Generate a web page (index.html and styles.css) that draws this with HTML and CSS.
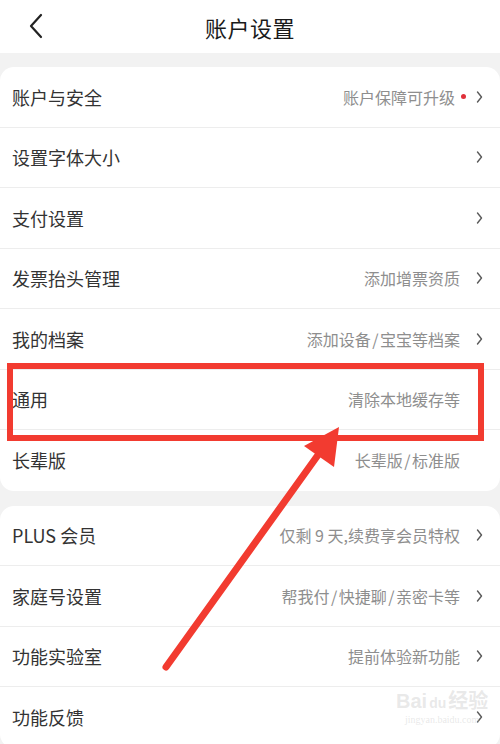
FILE: index.html
```html
<!DOCTYPE html>
<html lang="zh-CN">
<head>
    <meta charset="UTF-8">
    <meta name="viewport" content="width=device-width, initial-scale=1.0">
    <title>账户设置</title>
    <link rel="stylesheet" href="styles.css">
</head>
<body>
    <div class="page">
        <header class="nav">
            <svg class="back" width="16" height="26" viewBox="0 0 16 26">
                <polyline points="13,2 3,13 13,24" fill="none" stroke="#222" stroke-width="2.2" stroke-linejoin="round" stroke-linecap="round"/>
            </svg>
            <h1>账户设置</h1>
        </header>

        <div class="group">
            <div class="row">
                <span class="label">账户与安全</span>
                <span class="extra">账户保障可升级<i class="dot"></i></span>
                <svg class="chev" width="7" height="12" viewBox="0 0 7 12"><polyline points="1.5,1 5.5,6 1.5,11" /></svg>
            </div>
            <div class="row">
                <span class="label">设置字体大小</span>
                <span class="extra"></span>
                <svg class="chev" width="7" height="12" viewBox="0 0 7 12"><polyline points="1.5,1 5.5,6 1.5,11" /></svg>
            </div>
            <div class="row">
                <span class="label">支付设置</span>
                <span class="extra"></span>
                <svg class="chev" width="7" height="12" viewBox="0 0 7 12"><polyline points="1.5,1 5.5,6 1.5,11" /></svg>
            </div>
            <div class="row">
                <span class="label">发票抬头管理</span>
                <span class="extra">添加增票资质</span>
                <svg class="chev" width="7" height="12" viewBox="0 0 7 12"><polyline points="1.5,1 5.5,6 1.5,11" /></svg>
            </div>
            <div class="row">
                <span class="label">我的档案</span>
                <span class="extra">添加设备<span class="sl">/</span>宝宝等档案</span>
                <svg class="chev" width="7" height="12" viewBox="0 0 7 12"><polyline points="1.5,1 5.5,6 1.5,11" /></svg>
            </div>
            <div class="row">
                <span class="label">通用</span>
                <span class="extra">清除本地缓存等</span>
                <svg class="chev hidden" width="7" height="12" viewBox="0 0 7 12"></svg>
            </div>
            <div class="row">
                <span class="label">长辈版</span>
                <span class="extra">长辈版<span class="sl">/</span>标准版</span>
                <svg class="chev hidden" width="7" height="12" viewBox="0 0 7 12"></svg>
            </div>
        </div>

        <div class="group">
            <div class="row">
                <span class="label">PLUS 会员</span>
                <span class="extra">仅剩 9 天,续费享会员特权</span>
                <svg class="chev" width="7" height="12" viewBox="0 0 7 12"><polyline points="1.5,1 5.5,6 1.5,11" /></svg>
            </div>
            <div class="row">
                <span class="label">家庭号设置</span>
                <span class="extra">帮我付<span class="sl">/</span>快捷聊<span class="sl">/</span>亲密卡等</span>
                <svg class="chev" width="7" height="12" viewBox="0 0 7 12"><polyline points="1.5,1 5.5,6 1.5,11" /></svg>
            </div>
            <div class="row">
                <span class="label">功能实验室</span>
                <span class="extra">提前体验新功能</span>
                <svg class="chev" width="7" height="12" viewBox="0 0 7 12"><polyline points="1.5,1 5.5,6 1.5,11" /></svg>
            </div>
            <div class="row">
                <span class="label">功能反馈</span>
                <span class="extra"></span>
                <svg class="chev" width="7" height="12" viewBox="0 0 7 12"><polyline points="1.5,1 5.5,6 1.5,11" /></svg>
            </div>
        </div>

        <div class="watermark">
            <span class="wm-brand">Bai<b>du</b>经验</span>
            <span class="wm-url">jingyan.baidu.com</span>
        </div>

        <!-- annotation drawn over the screenshot -->
        <svg class="markup" width="500" height="744" viewBox="0 0 500 744">
            <rect x="10" y="366" width="471" height="72" fill="none" stroke="#f23b30" stroke-width="6"/>
            <line x1="166" y1="667" x2="318" y2="455" stroke="#f23b30" stroke-width="7" stroke-linecap="round"/>
            <polygon points="339,427 304,446 334,467" fill="#f23b30"/>
        </svg>
    </div>
</body>
</html>
```

FILE: styles.css
```css
* {
    margin: 0;
    padding: 0;
    box-sizing: border-box;
}

body {
    font-family: "Noto Sans CJK SC", "Noto Sans", sans-serif;
    background: #f2f2f2;
    color: #262626;
}

.page {
    position: relative;
    width: 500px;
    min-height: 744px;
    overflow: hidden;
}

.nav {
    height: 53px;
    background: #fff;
    display: flex;
    align-items: center;
    justify-content: center;
    position: relative;
    margin-bottom: 14px;
}

.nav h1 {
    font-size: 22px;
    font-weight: 400;
    color: #1a1a1a;
    letter-spacing: 0.5px;
}

.back {
    position: absolute;
    left: 28px;
    top: 13px;
}

.group {
    background: #fff;
    border-radius: 14px;
    margin-bottom: 15px;
}

.row {
    height: 60.5px;
    display: flex;
    align-items: center;
    padding: 0 17px 0 12px;
    border-bottom: 1px solid #ededed;
}

.row:last-child {
    border-bottom: none;
}

.label {
    font-size: 18px;
    color: #333;
    flex: 1;
}

.extra {
    font-size: 16px;
    color: #8e8e8e;
    display: flex;
    align-items: center;
    white-space: pre;
}

.sl {
    margin: 0 1.5px;
}

.dot {
    width: 5px;
    height: 5px;
    border-radius: 50%;
    background: #e0303a;
    margin-left: 6px;
    margin-right: -6px;
}

.chev {
    margin-left: 16px;
    fill: none;
    stroke: #5a5a5a;
    stroke-width: 1.4;
    stroke-linecap: round;
    stroke-linejoin: round;
}

.chev.hidden {
    visibility: hidden;
}

.watermark {
    position: absolute;
    left: 396px;
    top: 690px;
    display: flex;
    flex-direction: column;
    align-items: center;
    color: rgba(205, 205, 205, 0.45);
    pointer-events: none;
}

.wm-brand {
    font-family: "Liberation Sans", "Noto Sans CJK SC", sans-serif;
    font-size: 20px;
    font-weight: 700;
    line-height: 22px;
}

.wm-brand b {
    font-size: 14px;
    margin: 0 2px;
}

.wm-url {
    font-family: "Liberation Serif", serif;
    font-size: 10px;
    line-height: 12px;
}

.markup {
    position: absolute;
    left: 0;
    top: 0;
    pointer-events: none;
}
```
